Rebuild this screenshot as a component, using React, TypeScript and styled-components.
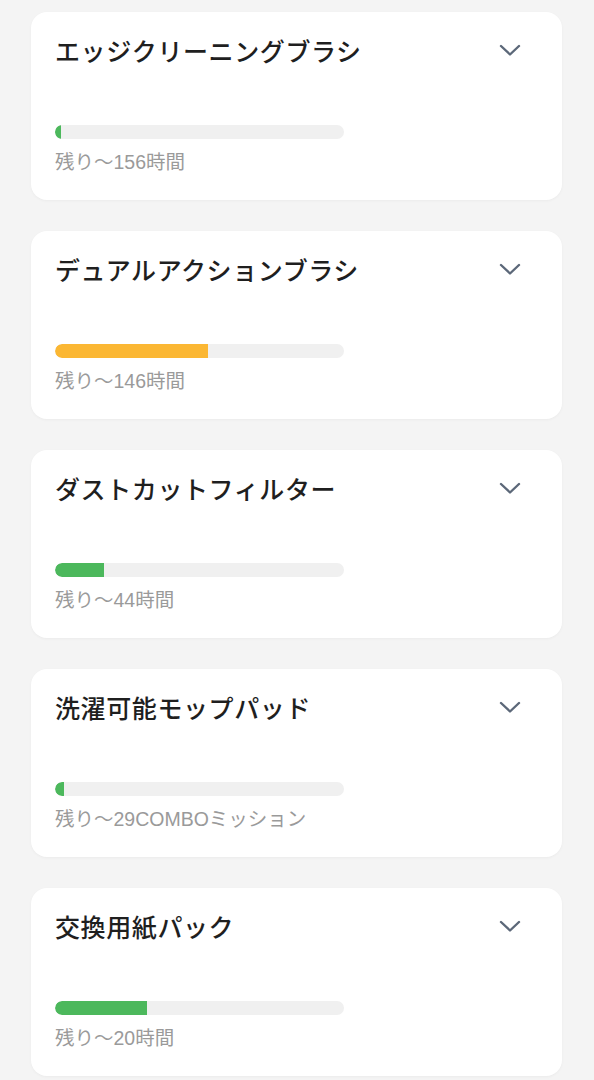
import styled, { createGlobalStyle } from 'styled-components';

type Part = {
  name: string;
  remain: string;
  percent: number;
  tone: 'ok' | 'warn';
};

const parts: Part[] = [
  { name: 'エッジクリーニングブラシ', remain: '残り～156時間', percent: 2, tone: 'ok' },
  { name: 'デュアルアクションブラシ', remain: '残り～146時間', percent: 53, tone: 'warn' },
  { name: 'ダストカットフィルター', remain: '残り～44時間', percent: 17, tone: 'ok' },
  { name: '洗濯可能モップパッド', remain: '残り～29COMBOミッション', percent: 3, tone: 'ok' },
  { name: '交換用紙パック', remain: '残り～20時間', percent: 32, tone: 'ok' },
];

const GlobalStyle = createGlobalStyle`
  html, body {
    margin: 0;
    padding: 0;
    background: #f4f4f4;
  }
  body {
    font-family: "Liberation Sans", "Noto Sans CJK JP", sans-serif;
  }
`;

const Page = styled.div`
  display: flex;
  flex-direction: column;
  gap: 31px;
  padding: 12px 32px 12px 31px;
`;

const Card = styled.section`
  background: #ffffff;
  border-radius: 16px;
  box-shadow: 0 1px 3px rgba(0, 0, 0, 0.04);
  padding: 22px 24px 26px 24px;
  height: 188px;
  box-sizing: border-box;
  display: flex;
  flex-direction: column;
`;

const Header = styled.div`
  display: flex;
  align-items: center;
  justify-content: space-between;
  height: 32px;
`;

const Title = styled.h2`
  margin: 0;
  font-family: "Noto Sans CJK JP", sans-serif;
  font-size: 25px;
  font-weight: 500;
  color: #1f1f1f;
  letter-spacing: 0.6px;
`;

const Toggle = styled.button`
  border: none;
  background: none;
  padding: 0;
  margin-right: 17px;
  display: flex;
  align-items: center;
  cursor: pointer;
`;

const Track = styled.div`
  margin-top: 59px;
  width: 289px;
  height: 14px;
  border-radius: 7px;
  background: #f0f0f0;
  overflow: hidden;
`;

const Fill = styled.div<{ $tone: 'ok' | 'warn' }>`
  height: 100%;
  border-radius: 7px 0 0 7px;
  background: ${(p) => (p.$tone === 'warn' ? '#fbb733' : '#4cb85c')};
`;

const Remain = styled.div`
  margin-top: 11px;
  font-size: 19.5px;
  line-height: 24px;
  color: #9a9a9a;
  font-family: "Liberation Sans", "Noto Sans CJK JP", sans-serif;
`;

function Chevron() {
  return (
    <svg width="22" height="13" viewBox="0 0 22 13" fill="none">
      <polyline
        points="2,2 11,10.5 20,2"
        stroke="#5c6879"
        strokeWidth="2.4"
        strokeLinecap="round"
        strokeLinejoin="round"
      />
    </svg>
  );
}

export default function App() {
  return (
    <>
      <GlobalStyle />
      <Page>
        {parts.map((p) => (
          <Card key={p.name}>
            <Header>
              <Title>{p.name}</Title>
              <Toggle aria-label="展開">
                <Chevron />
              </Toggle>
            </Header>
            <Track>
              <Fill $tone={p.tone} style={{ width: `${p.percent}%` }} />
            </Track>
            <Remain>{p.remain}</Remain>
          </Card>
        ))}
      </Page>
    </>
  );
}
